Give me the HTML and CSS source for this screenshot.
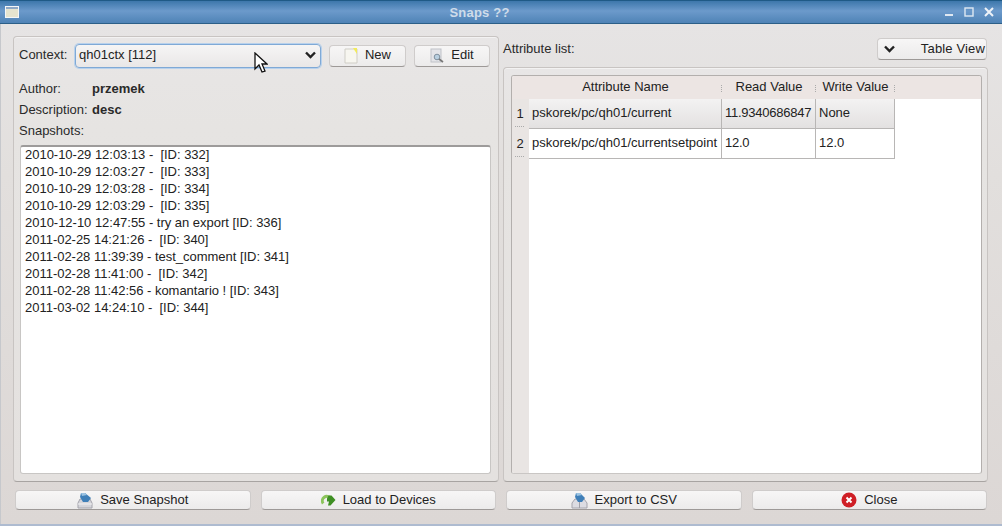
FILE: index.html
```html
<!DOCTYPE html>
<html lang="en">
<head>
<meta charset="utf-8">
<title>Snaps ??</title>
<link rel="stylesheet" href="styles.css">
</head>
<body>
<div class="window">
  <header class="titlebar">
    <svg class="app-icon" width="14" height="12" viewBox="0 0 14 12"><rect x="0.5" y="0.5" width="13" height="11" fill="#e6e4cf" stroke="#f4f6f8"/><rect x="1" y="1" width="12" height="2" fill="#8fa9c6"/></svg>
    <div class="title">Snaps ??</div>
    <div class="wm-buttons">
      <svg width="10" height="10" viewBox="0 0 10 10"><rect x="1" y="7" width="8" height="2" fill="#dfe8f2"/></svg>
      <svg width="10" height="10" viewBox="0 0 10 10"><rect x="1" y="1" width="8" height="8" fill="none" stroke="#dfe8f2" stroke-width="1.4"/></svg>
      <svg width="10" height="10" viewBox="0 0 10 10"><path d="M1 1l8 8M9 1l-8 8" stroke="#eef3f8" stroke-width="2"/></svg>
    </div>
  </header>
  <main class="content">
    <div class="panes">
      <section class="panel left">
        <div class="context-row">
          <span class="label context-label">Context:</span>
          <div class="combo"><span>qh01ctx [112]</span>
            <svg class="chev" width="11" height="8" viewBox="0 0 11 8"><path d="M1 1.500l4.500 4.500 4.500-4.500" fill="none" stroke="#222" stroke-width="2.400"/></svg>
          </div>
          <button class="btn small new"><svg width="14" height="16" viewBox="0 0 14 16"><path d="M1 1h12v14H1z" fill="#f7f6f0" stroke="#cfcdc6"/><path d="M9 0h4v6z" fill="#f1ea5c"/></svg><span>New</span></button>
          <button class="btn small edit"><svg width="15" height="15" viewBox="0 0 15 15"><rect x="1" y="1" width="10" height="13" fill="#e4e4e8" stroke="#bfc2c8"/><circle cx="7" cy="9" r="2.800" fill="#b9cfe0" stroke="#7f8f9e"/><path d="M9 11l4 3" stroke="#777" stroke-width="1.600"/></svg><span>Edit</span></button>
        </div>
        <div class="info-row first"><span class="label info-label">Author:</span><b>przemek</b></div>
        <div class="info-row"><span class="label info-label">Description:</span><b>desc</b></div>
        <div class="info-row"><span class="label">Snapshots:</span></div>
        <ul class="snapshots">
          <li>2010-10-29 12:03:13 -  [ID: 332]</li>
          <li>2010-10-29 12:03:27 -  [ID: 333]</li>
          <li>2010-10-29 12:03:28 -  [ID: 334]</li>
          <li>2010-10-29 12:03:29 -  [ID: 335]</li>
          <li>2010-12-10 12:47:55 - try an export [ID: 336]</li>
          <li>2011-02-25 14:21:26 -  [ID: 340]</li>
          <li>2011-02-28 11:39:39 - test_comment [ID: 341]</li>
          <li>2011-02-28 11:41:00 -  [ID: 342]</li>
          <li>2011-02-28 11:42:56 - komantario ! [ID: 343]</li>
          <li>2011-03-02 14:24:10 -  [ID: 344]</li>
        </ul>
      </section>
      <section class="right">
        <div class="attr-head">
          <span class="label">Attribute list:</span>
          <button class="btn view"><svg width="11" height="8" viewBox="0 0 11 8"><path d="M1 1.500l4.500 4.500 4.500-4.500" fill="none" stroke="#222" stroke-width="2.400"/></svg><span>Table View</span></button>
        </div>
        <div class="panel attr-panel">
          <div class="table-frame">
            <div class="thead">
              <div class="corner"></div>
              <div class="th name">Attribute Name</div>
              <div class="th read">Read Value</div>
              <div class="th write">Write Value</div>
            </div>
            <div class="tr">
              <div class="rownum">1</div>
              <div class="td name shaded">pskorek/pc/qh01/current</div>
              <div class="td read shaded">11.9340686847</div>
              <div class="td write shaded">None</div>
            </div>
            <div class="tr">
              <div class="rownum">2</div>
              <div class="td name">pskorek/pc/qh01/currentsetpoint</div>
              <div class="td read">12.0</div>
              <div class="td write">12.0</div>
            </div>
            <div class="tfill"><div class="gutter"></div></div>
          </div>
        </div>
      </section>
    </div>
    <footer class="actions">
      <button class="btn wide"><svg width="16" height="17" viewBox="0 0 16 17"><path d="M1 11l2-4h10l2 4v5H1z" fill="#d5d5da" stroke="#a4a4ac"/><path d="M1 12h14" stroke="#f2f2f4"/><path d="M4 1h4l6 5-3 4H6L3 5z" fill="#3f7fb8"/><path d="M4 1h4l2 2-5 1z" fill="#9cc3e2"/></svg><span>Save Snapshot</span></button>
      <button class="btn wide"><svg width="15" height="13" viewBox="0 0 15 13"><path d="M2.200 9.500A4.500 4.500 0 0 1 9.500 4.200" fill="none" stroke="#8cc45c" stroke-width="3"/><path d="M7.500 1.500h3l4 4.500-5 5.500h-2.500l1-4H6V4.500z" fill="#3f8f24"/></svg><span>Load to Devices</span></button>
      <button class="btn wide"><svg width="17" height="17" viewBox="0 0 17 17"><path d="M1 11l3-4h9l3 4v5H1z" fill="#dcdce2" stroke="#a4a4ac"/><path d="M8.500 8v8" stroke="#a0a0a8"/><path d="M5 1h4l5 5-3 4H7L4 5z" fill="#3f7fb8"/><path d="M5 1h4l2 2-5 1z" fill="#9cc3e2"/></svg><span>Export to CSV</span></button>
      <button class="btn wide"><svg width="16" height="16" viewBox="0 0 16 16"><circle cx="8" cy="8" r="7.500" fill="#cf1f26"/><path d="M5.500 5.500l5 5M10.500 5.500l-5 5" stroke="#fff" stroke-width="2"/></svg><span>Close</span></button>
    </footer>
  </main>
  <svg class="cursor" width="14" height="22" viewBox="0 0 14 22"><path d="M1 1v16l4-4 3 7 3-1-3-7h5z" fill="#fff" stroke="#111" stroke-width="1.300"/></svg>
</div>
</body>
</html>
```
FILE: styles.css
```css
* { box-sizing: border-box; }
html, body { margin: 0; padding: 0; }
body { width: 1002px; height: 526px; overflow: hidden; font: 13px "Liberation Sans", Arial, sans-serif; color: #222; background: #aebbd0; }
.window { position: relative; width: 1002px; height: 526px; display: flex; flex-direction: column; padding-bottom: 2px; }
.titlebar { height: 24px; flex: none; display: flex; align-items: center; padding: 0 5px; color: #dfe7ef; background: linear-gradient(#3d77ab, #6c9acb 45%, #4f83b6); border-top: 1px solid #1f5a86; border-bottom: 1px solid #2c5f88; }
.app-icon { flex: none; }
.title { flex: 1; text-align: center; font-weight: bold; font-size: 13px; letter-spacing: 0.2px; color: #cfdcea; padding-right: 4px; }
.wm-buttons { display: flex; gap: 10px; padding-right: 3px; }
.content { flex: 1; display: flex; flex-direction: column; padding: 12px 14px 0 13px; background: linear-gradient(#e6e4e4, #e2dfdd 30%, #dcd7d5); border-left: 1px solid #c6c8cc; min-height: 0; }
.panes { display: flex; gap: 4px; height: 446px; flex: none; margin-left: -1px; }
.panel { border: 1px solid #c8c4c2; border-bottom-color: #a8a4a2; border-radius: 4px; background: linear-gradient(#e8e6e6, #e6e4e2 20%, #e4e1df); box-shadow: inset 0 1px 0 #f3f2f2; }
.left { width: 486px; flex: none; display: flex; flex-direction: column; padding: 7px 7px 7px 5px; }
.label { color: #2a2a2a; }
.context-row { display: flex; align-items: center; height: 23px; flex: none; }
.context-label { width: 56px; flex: none; position: relative; top: -1px; }
.combo { width: 246px; height: 24px; flex: none; display: flex; align-items: center; justify-content: space-between; padding: 0 4px 1px 3px; margin-right: 8px; border: 1px solid #7fa9d6; border-radius: 4px; background: linear-gradient(#f6f5f5, #e9e7e7); box-shadow: 0 0 0 1px #b8d1ec; }
.combo span { position: relative; top: -1px; }
.btn { display: flex; align-items: center; justify-content: center; font: 13px "Liberation Sans", Arial, sans-serif; color: #222; padding: 0; border: 1px solid #cfcccb; border-bottom: 1px solid #9d9997; border-radius: 4px; background: linear-gradient(#f7f6f6, #ecebeb); }
.btn span { position: relative; top: -1px; }
.small { height: 22px; flex: none; gap: 7px; }
.new { width: 77px; margin-right: 8px; }
.edit { width: 76px; gap: 6px; }
.info-row { display: flex; height: 21px; flex: none; align-items: center; }
.info-row.first { margin-top: 11px; }
.info-label { width: 73px; flex: none; }
.info-row b { color: #2a2a2a; }
.snapshots { list-style: none; margin: 4px 0 0 1px; padding: 0 4px; flex: 1; min-height: 0; background: #fff; border: 1px solid #c8c6c4; border-top: 2px solid #9d9b9a; border-radius: 3px; }
.snapshots li { height: 17px; line-height: 15px; white-space: pre; letter-spacing: -0.02px; }
.right { flex: 1; display: flex; flex-direction: column; min-width: 0; }
.attr-head { height: 31px; flex: none; display: flex; justify-content: space-between; align-items: flex-start; }
.attr-head .label { margin-top: 5px; }
.view { width: 110px; height: 22px; padding: 0 0 0 6px; justify-content: space-between; margin-top: 2px; margin-right: 1px; }
.view span { padding-right: 1px; letter-spacing: 0.15px; }
.attr-panel { flex: 1; padding: 7px 5px 7px 7px; min-height: 0; }
.table-frame { height: 100%; display: flex; flex-direction: column; border: 1px solid #b3afad; border-bottom-color: #c9c6c4; border-radius: 3px; background: #fff; overflow: hidden; }
.thead { display: flex; height: 23px; flex: none; background: #ece5e3; }
.corner { width: 17px; }
.th { text-align: center; line-height: 22px; height: 23px; position: relative; }
.th.name { width: 193px; }
.th.read { width: 94px; }
.th.write { width: 79px; }
.th::after { content: ""; position: absolute; right: 0; top: 9px; height: 7px; border-right: 1px dotted #aaa; }
.tr { display: flex; height: 30px; flex: none; }
.rownum { width: 17px; flex: none; text-align: center; line-height: 29px; padding-right: 1px; background: #e9e5e3; position: relative; }
.rownum::after { content: ""; position: absolute; left: 3px; bottom: 2px; width: 9px; border-bottom: 1px dotted #aaa; }
.td { line-height: 28px; padding: 0 3px; border-right: 1px solid #b8b6b5; border-bottom: 1px solid #b8b6b5; white-space: nowrap; }
.td.name { width: 193px; }
.td.read { width: 94px; letter-spacing: -0.25px; }
.td.write { width: 79px; }
.shaded { background: linear-gradient(#f3f2f2, #e3e1e1); }
.tfill { flex: 1; }
.gutter { width: 17px; height: 100%; background: #e9e5e3; }
.actions { display: flex; gap: 10px; padding: 8px 0 0 1px; margin-right: 1px; }
.wide { flex: 1; height: 20px; gap: 7px; }
.cursor { position: absolute; left: 254px; top: 52px; }
```
